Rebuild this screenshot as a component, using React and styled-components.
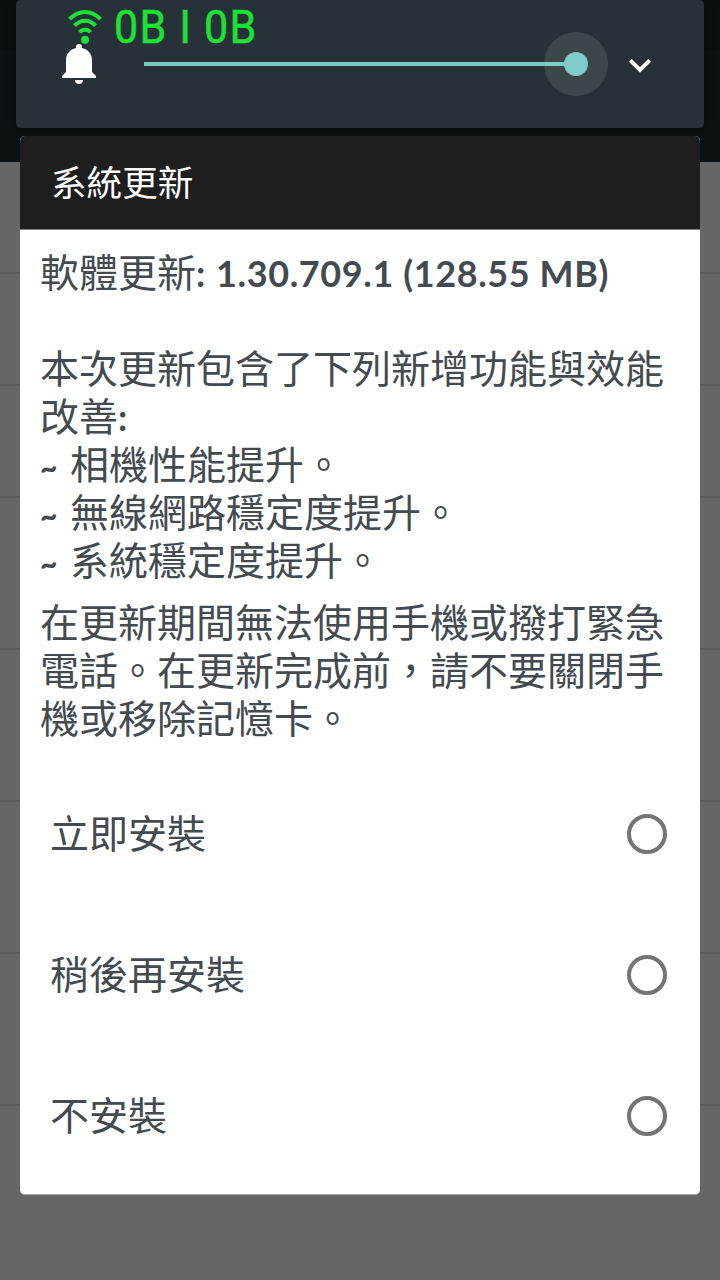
import React, { useState } from 'react';
import styled, { createGlobalStyle } from 'styled-components';

const GlobalStyle = createGlobalStyle`
  * {
    box-sizing: border-box;
  }

  body {
    margin: 0;
    background: #666666;
    font-family: 'Noto Sans CJK TC', sans-serif;
  }
`;

const Screen = styled.div`
  position: relative;
  width: 720px;
  height: 1280px;
  overflow: hidden;
  background: #666666;
`;

const Backdrop = styled.div`
  position: absolute;
  inset: 0;
`;

const BackdropStatus = styled.div`
  height: 50px;
  background: #0a0f0f;
`;

const BackdropToolbar = styled.div`
  height: 112px;
  background: #0c1214;
`;

const BackdropRow = styled.div`
  height: ${props => props.height}px;
  border-bottom: 2px solid #5b5b5b;
`;

const Foreground = styled.div`
  position: relative;
  display: flex;
  flex-direction: column;
  gap: 8px;
`;

const VolumePanel = styled.div`
  height: 128px;
  margin: 0 16px;
  padding: 0 40px 0 43px;
  display: flex;
  align-items: flex-start;
  background: #263238;
  border-radius: 5px;
  box-shadow: 0 2px 8px rgba(0, 0, 0, 0.35);
`;

const BellIcon = styled.svg`
  width: 40px;
  height: 46px;
  margin-top: 41px;
`;

const Slider = styled.div`
  display: flex;
  align-items: center;
  height: 64px;
  margin: 32px 0 0 45px;
`;

const Track = styled.div`
  width: 400px;
  height: 4px;
  background: #80cbc4;
`;

const Halo = styled.div`
  width: 64px;
  height: 64px;
  border-radius: 50%;
  display: flex;
  align-items: center;
  background: linear-gradient(#80cbc4, #80cbc4) 0 50% / 32px 4px no-repeat #3c474c;
`;

const Thumb = styled.div`
  width: 24px;
  height: 24px;
  margin: 0 auto;
  border-radius: 50%;
  background: #80cbc4;
`;

const ExpandIcon = styled.svg`
  width: 24px;
  height: 16px;
  margin: 58px 0 0 20px;
`;

const NetworkBadge = styled.div`
  position: absolute;
  top: 0;
  left: 67px;
  display: flex;
  color: #1ae334;
`;

const WifiIcon = styled.svg`
  width: 36px;
  height: 36px;
  margin-top: 9px;
`;

const Traffic = styled.span`
  margin-left: 11px;
  font-family: Roboto, sans-serif;
  font-size: 46px;
  line-height: 54px;
  letter-spacing: 1.3px;
  white-space: pre;
  -webkit-text-stroke: 0.5px currentColor;
  transform: scaleX(0.935);
  transform-origin: 0 50%;
`;

const Dialog = styled.section`
  height: 1059px;
  margin: 0 20px;
  border-radius: 5px;
  overflow: hidden;
  background: #ffffff;
  border-bottom: 1px solid #a8a8a8;
`;

const DialogTitle = styled.h1`
  height: 94px;
  margin: 0;
  padding: 0 31px;
  font-size: 35.6px;
  font-weight: 400;
  line-height: 90px;
  color: #ffffff;
  background: #1e1e1e;
  border-bottom: 1px solid #858585;
`;

const Message = styled.div`
  padding: 16px 20px 0;
  color: #434b50;
  font-size: 39px;
  line-height: 48px;
`;

const Paragraph = styled.p`
  margin: 0 0 ${props => props.gap || 0}px;
  white-space: nowrap;
`;

const Line = styled.span`
  display: block;
  height: 48px;
`;

const Latin = styled.span`
  font-family: Lato, sans-serif;
  font-weight: 700;
  font-size: 36px;
  letter-spacing: ${props => props.spacing || 0}px;
  line-height: 1;
`;

const Bullet = styled.span`
  display: inline-block;
  width: 30px;
  font-family: Lato, sans-serif;
  font-weight: 900;
  font-size: 30px;
  line-height: 1;
`;

const Options = styled.div`
  margin-top: 23px;
`;

const Option = styled.label`
  height: 141px;
  padding: 0 33px 0 30px;
  display: flex;
  align-items: center;
  justify-content: space-between;
  color: #434b50;
  font-size: 39px;
  line-height: 48px;
`;

const OptionLabel = styled.span`
  padding-bottom: 6px;
`;

const Radio = styled.input`
  appearance: none;
  width: 40px;
  height: 40px;
  margin: 0;
  border: 4px solid #747474;
  border-radius: 50%;

  &:checked {
    background: radial-gradient(#009688 0 10px, transparent 11px);
    border-color: #009688;
  }
`;

const rowHeights = [112, 112, 112, 152, 152, 152, 152];

const features = ['相機性能提升。', '無線網路穩定度提升。', '系統穩定度提升。'];

const options = [
  { id: 'now', label: '立即安裝' },
  { id: 'later', label: '稍後再安裝' },
  { id: 'never', label: '不安裝' }
];

const App = () => {
  const [choice, setChoice] = useState(null);

  return (
    <Screen>
      <GlobalStyle />

      <Backdrop>
        <BackdropStatus />
        <BackdropToolbar />
        {rowHeights.map((height, i) => (
          <BackdropRow key={i} height={height} />
        ))}
      </Backdrop>

      <Foreground>
        <VolumePanel>
          <BellIcon viewBox="0 0 40 46" fill="#ffffff">
            <path d="M3 37V35L7 31V19C7 12.500 11 8.500 17 7V6A3 3 0 0 1 23 6V7C29 8.500 33 12.500 33 19V31L37 35V37ZM16 39H24C24 41.500 22.500 43 20 43S16 41.500 16 39Z" />
          </BellIcon>
          <Slider>
            <Track />
            <Halo>
              <Thumb />
            </Halo>
          </Slider>
          <ExpandIcon viewBox="0 0 24 16" fill="none" stroke="#ffffff" strokeWidth="4">
            <path d="M2.400 2.400L12 12L21.600 2.400" />
          </ExpandIcon>
        </VolumePanel>

        <Dialog>
          <DialogTitle>系統更新</DialogTitle>
          <Message>
            <Paragraph gap={14}>
              <Line>
                軟體更新<Latin spacing={1}>: </Latin><Latin spacing={0.6}>1.30.709.1 (128.55 MB)</Latin>
              </Line>
              <Line />
              <Line>本次更新包含了下列新增功能與效能</Line>
              <Line>改善<Latin>:</Latin></Line>
              {features.map(text => (
                <Line key={text}><Bullet>~</Bullet>{text}</Line>
              ))}
            </Paragraph>
            <Paragraph>
              <Line>在更新期間無法使用手機或撥打緊急</Line>
              <Line>電話。在更新完成前，請不要關閉手</Line>
              <Line>機或移除記憶卡。</Line>
            </Paragraph>
          </Message>
          <Options>
            {options.map(option => (
              <Option key={option.id}>
                <OptionLabel>{option.label}</OptionLabel>
                <Radio
                  type="radio"
                  name="install"
                  checked={choice === option.id}
                  onChange={() => setChoice(option.id)}
                />
              </Option>
            ))}
          </Options>
        </Dialog>
      </Foreground>

      <NetworkBadge>
        <WifiIcon viewBox="0 0 36 36" fill="none" stroke="currentColor" strokeWidth="4">
          <path d="M2.500 10.200C11.500 0.500 24.500 0.500 33.500 10.200" />
          <path d="M7.500 16.700C13.500 10 22.500 10 28.500 16.700" />
          <path d="M12.500 23.200C15.500 19.800 20.500 19.800 23.500 23.200" />
          <circle cx="18" cy="30.700" r="4" fill="currentColor" stroke="none" />
        </WifiIcon>
        <Traffic>0B I 0B</Traffic>
      </NetworkBadge>
    </Screen>
  );
};

export default App;
